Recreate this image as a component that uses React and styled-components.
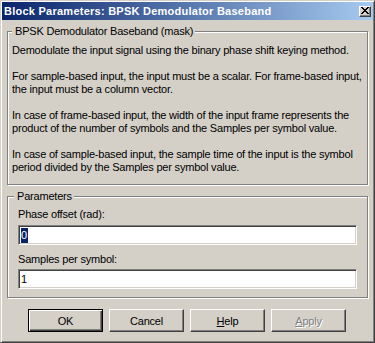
import styled, { createGlobalStyle } from "styled-components";

const GlobalStyle = createGlobalStyle`
    html, body {
        margin: 0;
        padding: 0;
        background: #d4d0c8;
    }
    body {
        font-family: "Liberation Sans", Arial, sans-serif;
        font-size: 11px;
        letter-spacing: -0.2px;
        color: #000;
    }
`;

const App = () => {
    return (
        <>
            <GlobalStyle />
            <Window>
                <TitleBar>
                    <Title>Block Parameters: BPSK Demodulator Baseband</Title>
                    <CloseButton>
                        <svg width="8" height="7" viewBox="0 0 8 7" shapeRendering="crispEdges">
                            <path d="M0 0h2v1h-2zM6 0h2v1h-2zM1 1h2v1h-2zM5 1h2v1h-2zM2 2h4v1h-4zM3 3h2v1h-2zM2 4h4v1h-4zM1 5h2v1h-2zM5 5h2v1h-2zM0 6h2v1h-2zM6 6h2v1h-2z" fill="#000" />
                        </svg>
                    </CloseButton>
                </TitleBar>

                <Group>
                    <Legend $offset={4}>BPSK Demodulator Baseband (mask)</Legend>
                    <Description>
                        <Para>Demodulate the input signal using the binary phase shift keying method.</Para>
                        <Para>
                            For sample-based input, the input must be a scalar. For frame-based input,<br />
                            the input must be a column vector.
                        </Para>
                        <Para>
                            In case of frame-based input, the width of the input frame represents the<br />
                            product of the number of symbols and the Samples per symbol value.
                        </Para>
                        <Para>
                            In case of sample-based input, the sample time of the input is the symbol<br />
                            period divided by the Samples per symbol value.
                        </Para>
                    </Description>
                </Group>

                <Group>
                    <Legend $offset={6}>Parameters</Legend>
                    <Params>
                        <Label>Phase offset (rad):</Label>
                        <Field>
                            <Selected>0</Selected>
                        </Field>
                        <Label $gap>Samples per symbol:</Label>
                        <Field>1</Field>
                    </Params>
                </Group>

                <ButtonRow>
                    <Button $default>OK</Button>
                    <Button>Cancel</Button>
                    <Button><u>H</u>elp</Button>
                    <Button disabled><u>A</u>pply</Button>
                </ButtonRow>
            </Window>
        </>
    );
};

export default App;

const Window = styled.div`
    width: 375px;
    height: 343px;
    box-sizing: border-box;
    background: #d4d0c8;
    border: 1px solid;
    border-color: #d4d0c8 #404040 #404040 #d4d0c8;
    box-shadow: inset 1px 1px 0 #fff, inset -1px -1px 0 #808080;
    padding: 1px;
    display: flex;
    flex-direction: column;
`;

const TitleBar = styled.div`
    height: 18px;
    flex-shrink: 0;
    display: flex;
    align-items: center;
    padding-left: 2px;
    background: linear-gradient(to right, #0a246a, #a6caf0);
`;

const Title = styled.div`
    color: #fff;
    font-weight: bold;
    font-size: 11px;
    letter-spacing: 0.25px;
    white-space: nowrap;
`;

const CloseButton = styled.div`
    margin-left: auto;
    margin-right: 2px;
    width: 12px;
    height: 11px;
    box-sizing: border-box;
    background: #d4d0c8;
    border: 1px solid;
    border-color: #fff #404040 #404040 #fff;
    box-shadow: inset -1px -1px 0 #808080;
    display: flex;
    align-items: center;
    justify-content: center;
    padding-bottom: 1px;
`;

const Group = styled.fieldset`
    margin: 5px 5px 0 5px;
    padding: 0;
    border: 1px solid #808080;
    box-shadow: 1px 1px 0 #fff, inset 1px 1px 0 #fff;
    min-width: 0;
`;

const Legend = styled.legend`
    margin-left: ${p => p.$offset}px;
    padding: 0 2px 0 3px;
    line-height: 13px;
    background: #d4d0c8;
    white-space: nowrap;
`;

const Description = styled.div`
    padding: 6px 4px 10px 4px;
    line-height: 13px;
    white-space: nowrap;
`;

const Para = styled.p`
    margin: 0;
    & + & {
        margin-top: 13px;
    }
`;

const Params = styled.div`
    padding: 5px 10px 8px 10px;
    display: flex;
    flex-direction: column;
`;

const Label = styled.div`
    line-height: 13px;
    margin-top: ${p => (p.$gap ? "8px" : "0")};
    margin-bottom: ${p => (p.$gap ? "3px" : "4px")};
`;

const Field = styled.div`
    height: 20px;
    box-sizing: border-box;
    background: #fff;
    border: 1px solid;
    border-color: #808080 #fff #fff #808080;
    box-shadow: inset 1px 1px 0 #404040, inset -1px -1px 0 #d4d0c8;
    padding: 0 2px;
    display: flex;
    align-items: center;
`;

const Selected = styled.span`
    background: #0a246a;
    color: #fff;
    line-height: 15px;
    padding-right: 1px;
`;

const ButtonRow = styled.div`
    display: flex;
    gap: 6px;
    padding-left: 26px;
    margin-top: 11px;
`;

const Button = styled.button`
    width: 75px;
    height: 23px;
    box-sizing: border-box;
    padding: 0;
    font-family: inherit;
    font-size: 11px;
    letter-spacing: inherit;
    color: #000;
    background: #d4d0c8;
    border: 1px solid;
    border-color: ${p => (p.$default ? "#000" : "#fff #404040 #404040 #fff")};
    box-shadow: ${p =>
        p.$default
            ? "inset 1px 1px 0 #fff, inset -1px -1px 0 #404040, inset -2px -2px 0 #808080"
            : "inset -1px -1px 0 #808080"};

    &:disabled {
        color: #808080;
        text-shadow: 1px 1px 0 #fff;
    }
`;
